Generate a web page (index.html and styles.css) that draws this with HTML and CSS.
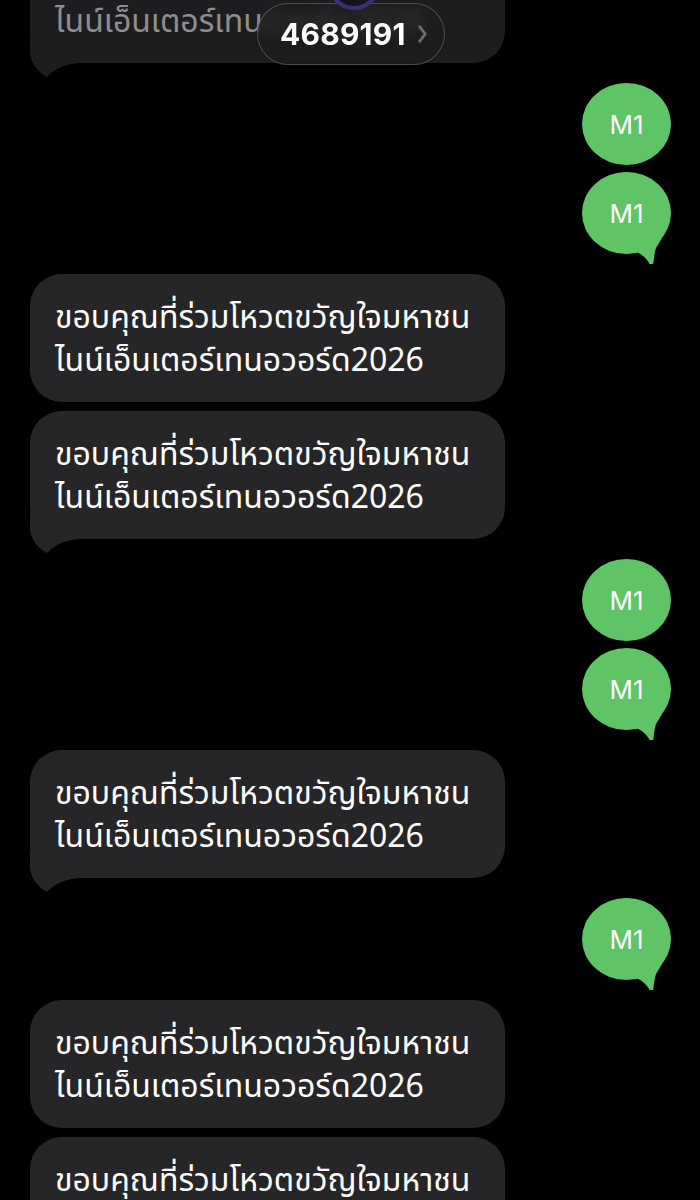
FILE: index.html
```html
<!DOCTYPE html>
<html lang="th">
<head>
    <meta charset="UTF-8">
    <meta name="viewport" content="width=device-width, initial-scale=1.0">
    <title>Messages</title>
    <link rel="stylesheet" href="styles.css">
</head>
<body>
    <div class="screen">
        <div class="thread">
            <!-- received, partly under the header -->
            <div class="msg in faded">
                <span class="line">ขอบคุณที่ร่วมโหวตขวัญใจมหาชน</span>
                <span class="line">ไนน์เอ็นเตอร์เทนอวอร์ด2026</span>
                <svg class="tail" viewBox="0 0 50 40" width="50" height="40"><path d="M0,0 L0,14 C0,26 8,35 17,40 C22,35 31,27 50,26 L50,0 Z"/></svg>
            </div>

            <div class="msg out">M1</div>
            <div class="msg out grouped">M1
                <svg class="tail" viewBox="0 0 40 40" width="40" height="40"><path d="M5,28 C12,32 16,36 18,41 Q20,44 21,41 C22,36 22,30 24,24 L30,14 L10,14 Z"/></svg>
            </div>

            <div class="msg in">
                <span class="line">ขอบคุณที่ร่วมโหวตขวัญใจมหาชน</span>
                <span class="line">ไนน์เอ็นเตอร์เทนอวอร์ด2026</span>
            </div>
            <div class="msg in grouped">
                <span class="line">ขอบคุณที่ร่วมโหวตขวัญใจมหาชน</span>
                <span class="line">ไนน์เอ็นเตอร์เทนอวอร์ด2026</span>
                <svg class="tail" viewBox="0 0 50 40" width="50" height="40"><path d="M0,0 L0,14 C0,26 8,35 17,40 C22,35 31,27 50,26 L50,0 Z"/></svg>
            </div>

            <div class="msg out">M1</div>
            <div class="msg out grouped">M1
                <svg class="tail" viewBox="0 0 40 40" width="40" height="40"><path d="M5,28 C12,32 16,36 18,41 Q20,44 21,41 C22,36 22,30 24,24 L30,14 L10,14 Z"/></svg>
            </div>

            <div class="msg in">
                <span class="line">ขอบคุณที่ร่วมโหวตขวัญใจมหาชน</span>
                <span class="line">ไนน์เอ็นเตอร์เทนอวอร์ด2026</span>
                <svg class="tail" viewBox="0 0 50 40" width="50" height="40"><path d="M0,0 L0,14 C0,26 8,35 17,40 C22,35 31,27 50,26 L50,0 Z"/></svg>
            </div>

            <div class="msg out">M1
                <svg class="tail" viewBox="0 0 40 40" width="40" height="40"><path d="M5,28 C12,32 16,36 18,41 Q20,44 21,41 C22,36 22,30 24,24 L30,14 L10,14 Z"/></svg>
            </div>

            <div class="msg in">
                <span class="line">ขอบคุณที่ร่วมโหวตขวัญใจมหาชน</span>
                <span class="line">ไนน์เอ็นเตอร์เทนอวอร์ด2026</span>
            </div>
            <div class="msg in grouped">
                <span class="line">ขอบคุณที่ร่วมโหวตขวัญใจมหาชน</span>
                <span class="line">ไนน์เอ็นเตอร์เทนอวอร์ด2026</span>
            </div>
        </div>

        <!-- sender header floating over the thread -->
        <div class="avatar"></div>
        <div class="sender-pill">
            <span class="sender-number">4689191</span>
            <svg class="chevron" viewBox="0 0 9 18" width="9" height="18"><path d="M1.8,1.8 L7.2,9 L1.8,16.2"/></svg>
        </div>
    </div>
</body>
</html>
```

FILE: styles.css
```css
html, body {
    margin: 0;
    padding: 0;
    background-color: #000;
}
.screen {
    position: relative;
    width: 700px;
    height: 1200px;
    overflow: hidden;
    font-family: Inter, "Noto Sans", sans-serif;
}
.thread {
    display: flex;
    flex-direction: column;
    margin-top: -65px;
}
.msg {
    position: relative;
    box-sizing: border-box;
    margin-top: 20px;
}
.msg:first-child {
    margin-top: 0;
}
.msg.grouped {
    margin-top: 9px;
}
.msg.out.grouped {
    margin-top: 7px;
}

/* received bubbles */
.msg.in {
    align-self: flex-start;
    margin-left: 30px;
    width: 475px;
    height: 128px;
    padding: 4px 25px 0;
    border-radius: 32px;
    background-color: #262628;
    color: #fff;
    display: flex;
    flex-direction: column;
    justify-content: center;
    font-family: "Noto Sans Thai", "Noto Sans", "DejaVu Sans", sans-serif;
    font-size: 32px;
    line-height: 43px;
}
.msg.in .line {
    white-space: nowrap;
}
.msg.in .tail {
    position: absolute;
    left: 0;
    bottom: -14px;
    fill: #262628;
}
.msg.in.faded {
    background-color: #1d1d1f;
    color: #8e8e90;
}
.msg.in.faded .tail {
    fill: #1d1d1f;
}

/* sent bubbles */
.msg.out {
    align-self: flex-end;
    margin-right: 29px;
    width: 89px;
    height: 82px;
    border-radius: 50%;
    background-color: #5fc465;
    color: #fff;
    font-size: 26px;
    display: flex;
    align-items: center;
    justify-content: center;
}
.msg.out .tail {
    position: absolute;
    left: 50px;
    top: 52px;
    fill: #5fc465;
}

/* header */
.sender-pill {
    position: absolute;
    left: 257px;
    top: 3px;
    width: 188px;
    height: 62px;
    box-sizing: border-box;
    border-radius: 31px;
    border: 1.5px solid rgba(255, 255, 255, 0.22);
    background-color: rgba(30, 30, 32, 0.78);
    backdrop-filter: blur(5px);
    display: flex;
    align-items: center;
    padding-left: 22px;
    gap: 12px;
}
.sender-number {
    color: #fff;
    font-weight: 700;
    font-size: 30px;
    letter-spacing: 0.2px;
}
.chevron {
    fill: none;
    stroke: #6f6f72;
    stroke-width: 2.8;
    stroke-linecap: round;
    stroke-linejoin: round;
}
.avatar {
    position: absolute;
    left: 328px;
    top: -42px;
    width: 52px;
    height: 52px;
    box-sizing: border-box;
    border-radius: 50%;
    border: 4px solid #3b2f78;
    background-color: #15131f;
    z-index: 2;
}
```
